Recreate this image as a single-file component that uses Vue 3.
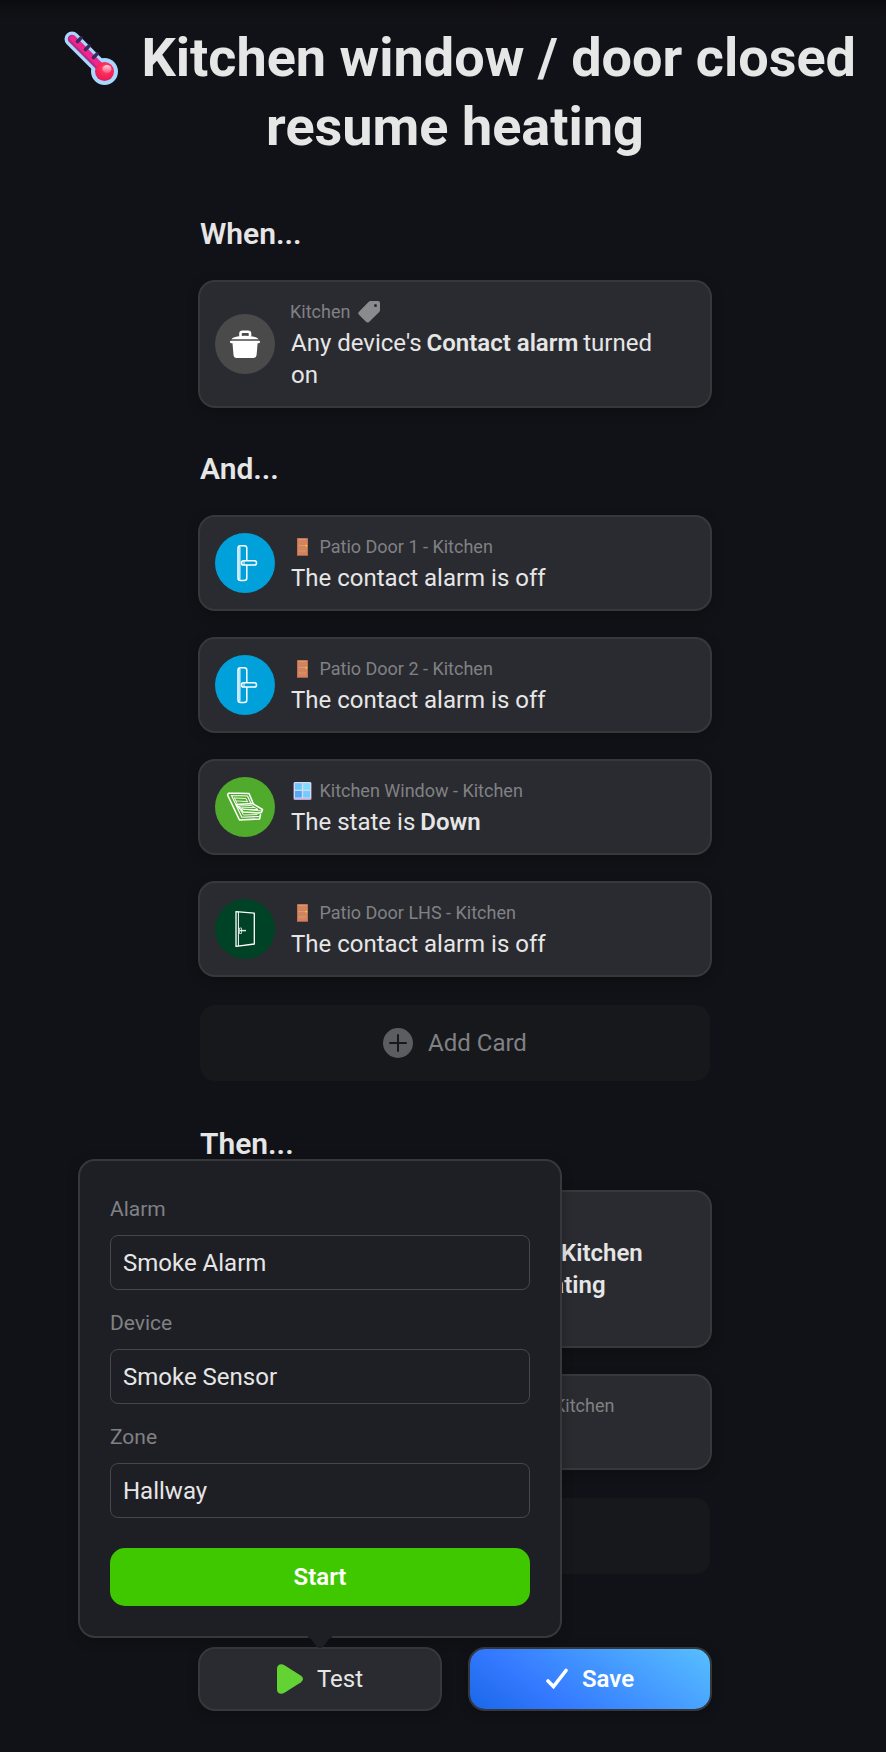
<script setup>
import { ref } from 'vue'

const conditions = [
  { icon: 'handle', tone: 'blue', emoji: 'door', label: 'Patio Door 1 - Kitchen', text: 'The contact alarm is off' },
  { icon: 'handle', tone: 'blue', emoji: 'door', label: 'Patio Door 2 - Kitchen', text: 'The contact alarm is off' },
  { icon: 'roof', tone: 'green', emoji: 'window', label: 'Kitchen Window - Kitchen', text: 'The state is', strong: 'Down' },
  { icon: 'leaf', tone: 'forest', emoji: 'door', label: 'Patio Door LHS - Kitchen', text: 'The contact alarm is off' },
]

const fields = ref([
  { id: 'alarm', label: 'Alarm', value: 'Smoke Alarm' },
  { id: 'device', label: 'Device', value: 'Smoke Sensor' },
  { id: 'zone', label: 'Zone', value: 'Hallway' },
])
</script>

<template>
  <main class="page">
    <h1 class="title">
      <svg class="thermo" viewBox="0 0 74 54" aria-hidden="true">
        <defs>
          <radialGradient id="bulb" cx="0.55" cy="0.35" r="0.7">
            <stop offset="0" stop-color="#ff4a72" />
            <stop offset="0.55" stop-color="#fa2458" />
            <stop offset="1" stop-color="#d81f55" />
          </radialGradient>
          <linearGradient id="shine" x1="0" y1="0" x2="0" y2="1">
            <stop offset="0" stop-color="#ffd3dc" />
            <stop offset="1" stop-color="#ff4f78" />
          </linearGradient>
        </defs>
        <g class="glyph">
          <path d="M18 8 L48 38" stroke="#a9d8ff" stroke-width="15" stroke-linecap="round" />
          <circle cx="50.500" cy="40.500" r="13.500" fill="#a9d8ff" />
          <path d="M18 8 L48 38" stroke="#b52a86" stroke-width="8.500" stroke-linecap="round" />
          <path d="M18.700 7.300 L48.700 37.300" stroke="#f0268c" stroke-width="5.800" stroke-linecap="round" />
          <circle cx="50.500" cy="40.500" r="9.500" fill="url(#bulb)" />
          <ellipse cx="53" cy="38" rx="4.500" ry="4" fill="url(#shine)" />
          <path d="M23.500 10.500 L27 7 M31.500 18.500 L35 15 M39.500 26.500 L43 23" stroke="#3b2a5c" stroke-width="3.600" stroke-linecap="round" />
        </g>
      </svg>
      Kitchen window / door closed resume heating
    </h1>

    <div class="flow">
      <h2 class="heading first">When...</h2>
      <section class="card">
        <span class="badge grey">
          <svg viewBox="0 0 60 60" aria-hidden="true">
            <path d="M25.500 22 V19.500 Q25.500 17.700 27.500 17.700 H33 Q35 17.700 35 19.500 V22" fill="none" stroke="#fff" stroke-width="2.600" />
            <path d="M16.500 25.300 Q17 23.500 20 22.900 Q30 20.500 40 22.900 Q43 23.500 43.500 25.300 Z" fill="#fff" />
            <path d="M16 26.800 H44 Q45.300 26.800 45 28.200 Q44.700 29.300 43.500 29.300 H42.600 L41.600 41 Q41.300 44 38.500 44 H21.500 Q18.800 44 18.500 41 L17.500 29.300 H16.500 Q15.300 29.300 15 28.200 Q14.800 26.800 16 26.800 Z" fill="#fff" />
          </svg>
        </span>
        <div class="body">
          <p class="label">
            Kitchen
            <svg class="tag" viewBox="0 0 22 22" aria-hidden="true">
              <path fill-rule="evenodd" d="M12.500 0 H20 Q22 0 22 2 V9 Q22 10.200 21 11.200 L11 21 Q9.500 22.200 8 20.800 L1 13.800 Q-0.500 12.200 1 10.700 L10.500 1 Q11.500 0 12.500 0 Z M17.500 3 A1.500 1.500 0 1 0 17.500 6 A1.500 1.500 0 1 0 17.500 3 Z" />
            </svg>
          </p>
          <p class="text">
            <span>Any device's</span> <strong>Contact alarm</strong> <span>turned</span> <span>on</span>
          </p>
        </div>
      </section>

      <h2 class="heading">And...</h2>
      <div class="stack">
        <section v-for="c in conditions" :key="c.label" class="card">
          <span class="badge" :class="c.tone">
            <svg v-if="c.icon === 'handle'" viewBox="0 0 60 60" fill="none" stroke="#fff" aria-hidden="true">
              <rect x="23" y="12.800" width="8.800" height="34.600" rx="2.500" stroke-width="1.500" />
              <path d="M24.700 14 V46.500" stroke-width="1.800" opacity="0.750" />
              <rect x="26.500" y="27.800" width="15" height="4.300" rx="2.100" fill="#00a0da" stroke-width="1.500" />
              <path d="M29 28 V32" stroke-width="1" />
            </svg>
            <svg v-else-if="c.icon === 'roof'" viewBox="0 0 60 60" fill="none" stroke="#fff" stroke-linejoin="round" stroke-linecap="round" aria-hidden="true">
              <path d="M14 16 L34 16.500 L38 26 M12.800 18.500 L24.500 43 L44.500 42 L45.500 37.500 M14 16 Q12.500 16.500 12.800 18.500" stroke-width="1.600" />
              <path d="M16.500 18.500 L32.500 19 L36 26.500 M16.500 18.500 L26.800 40.300 L43.500 39.500" stroke-width="1.100" />
              <path d="M19.500 21 L31 21.500 L32.500 25 M19.500 21 L22 26.500 M26 34 L28.500 38 L42 37.500 M21.500 24 L32 24.500" stroke-width="0.900" />
              <path d="M21 27.500 L37.500 26.500 L47.500 32.500 L46.500 35.500 L43.500 36 L28 35 Z" stroke-width="1.500" />
              <path d="M24 29 L36.500 28.500 L43 32.500 L29 32.500 Z M27 30.800 L39 30.500 M28 35 L26 32 L46.500 34" stroke-width="0.900" />
            </svg>
            <svg v-else viewBox="0 0 60 60" fill="none" stroke="#fff" stroke-linejoin="round" aria-hidden="true">
              <path d="M21 12.600 L39.300 14.200 V45 L21 47.400 Z" stroke-width="1.300" />
              <path d="M23.400 13 V47" stroke-width="1" />
              <path d="M24.500 29 H26.500 V34.500 H24.500 Z" stroke-width="0.700" />
              <path d="M25 31.600 H31" stroke-width="1.500" opacity="0.850" />
            </svg>
          </span>
          <div class="body">
            <p class="label">
              <svg v-if="c.emoji === 'door'" class="emoji" viewBox="0 0 25 18" aria-hidden="true">
                <rect x="7" width="11" height="18" rx="0.600" fill="#c0754f" />
                <rect x="8" y="1" width="9" height="16" fill="#cf8660" />
                <path d="M8.500 1.500 H16 M8.500 7.500 H16 M8.500 13 H16" stroke="#e09a70" stroke-width="0.900" />
                <path d="M7.300 17.500 H18" stroke="#a65e48" stroke-width="1" />
                <circle cx="16.300" cy="7.700" r="0.900" fill="#ffc83d" />
              </svg>
              <svg v-else class="emoji" viewBox="0 0 25 18" aria-hidden="true">
                <rect x="3.500" width="18" height="18" rx="1.500" fill="#b9a5d2" />
                <rect x="4" width="17" height="16.500" rx="1.200" fill="#d5d8ec" />
                <rect x="5" y="1.200" width="6.800" height="6.500" fill="#6dc6fb" />
                <rect x="13.200" y="1.200" width="6.800" height="6.500" fill="#7edcff" />
                <rect x="5" y="9" width="6.800" height="6.500" fill="#52a8f8" />
                <rect x="13.200" y="9" width="6.800" height="6.500" fill="#72ccff" />
              </svg>
              {{ c.label }}
            </p>
            <p class="text"><span>{{ c.text }}</span> <strong v-if="c.strong">{{ c.strong }}</strong></p>
          </div>
        </section>
        <button type="button" class="add">
          <svg viewBox="0 0 30 30" aria-hidden="true">
            <circle cx="15" cy="15" r="15" fill="#5c5d60" />
            <path d="M15 7 V23 M7 15 H23" stroke="#17181c" stroke-width="2" stroke-linecap="round" />
          </svg>
          Add Card
        </button>
      </div>

      <h2 class="heading">Then...</h2>
      <div class="stack">
        <section class="card tall">
          <div class="body behind">
            <p class="text"><strong>Kitchen</strong></p>
            <p class="text pulled"><strong>heating</strong></p>
          </div>
        </section>
        <section class="card">
          <div class="body behind short">
            <p class="label">Kitchen</p>
          </div>
        </section>
        <button type="button" class="add" aria-label="Add action"></button>
      </div>

      <div class="actions">
        <div class="anchor">
          <form class="popover" @submit.prevent>
            <div v-for="f in fields" :key="f.id" class="field">
              <label :for="f.id">{{ f.label }}</label>
              <input :id="f.id" v-model="f.value" type="text" />
            </div>
            <button type="submit" class="start">Start</button>
            <svg class="arrow" viewBox="0 0 30 14" aria-hidden="true">
              <path d="M3 0 H27 V2 Q24 2 22.500 5 L18.500 10.500 Q15 13.500 11.500 10.500 L7.500 5 Q6 2 3 2 Z" fill="#1e1f24" />
            </svg>
          </form>
          <button type="button" class="action">
            <svg class="play" viewBox="0 0 26 30" aria-hidden="true">
              <path d="M0 4.500 C0 0.500 4 -1 7.500 1.200 L24 11.800 Q28 15 24 18.200 L7.500 28.800 C4 31 0 29.500 0 25.500 Z" fill="#63d333" />
            </svg>
            Test
          </button>
        </div>
        <button type="button" class="action save">
          <svg class="check" viewBox="0 0 22 22" aria-hidden="true">
            <path d="M2 13 L7.500 18.500 L20 2.500" fill="none" stroke="#fff" stroke-width="3.600" stroke-linecap="round" />
          </svg>
          Save
        </button>
      </div>
    </div>
  </main>
</template>

<style>
body {
  background: #111217;
}
</style>

<style scoped>
.page {
  box-sizing: border-box;
  min-height: 100vh;
  padding: 23px 0 43px 24px;
  background: linear-gradient(#0c0c10, #111217 20px);
  color: #e6e6e6;
  font-family: Roboto, "Liberation Sans", sans-serif;
}
h1, h2, p {
  margin: 0;
}
button, input {
  font: inherit;
  color: inherit;
}
strong {
  font-weight: 600;
}
.title {
  font-size: 54px;
  line-height: 69px;
  font-weight: 700;
  text-align: center;
}
.thermo {
  width: 74px;
  height: 54px;
  vertical-align: -9px;
  fill: none;
}
.flow {
  max-width: 510px;
  margin: 0 auto;
}
.heading {
  margin: 43px 0 28px;
  font-size: 30px;
  line-height: 40px;
  font-weight: 600;
}
.heading.first {
  margin-top: 53px;
}
.stack {
  display: flex;
  flex-direction: column;
  gap: 30px;
}
.card {
  display: flex;
  align-items: center;
  gap: 15px;
  padding: 15px;
  border-radius: 15px;
  background: #2a2b30;
  box-shadow: 0 0 0 2px #37383c, 0 3px 12px 2px rgba(0, 0, 0, 0.25);
}
.badge {
  flex: none;
  width: 60px;
  height: 60px;
  border-radius: 50%;
}
.badge svg {
  display: block;
}
.grey { background: #4a4a4a; }
.blue { background: #00a0da; }
.green { background: #50aa2b; }
.forest { background: #004225; }
.body {
  flex: 1;
  padding-right: 30px;
}
.label {
  font-size: 18px;
  line-height: 30px;
  height: 30px;
  color: #808184;
}
.emoji {
  width: 25px;
  height: 18px;
  vertical-align: -3px;
}
.tag {
  width: 22px;
  height: 22px;
  margin-left: 3px;
  vertical-align: -5px;
  fill: #8a8b8f;
}
.text {
  display: flex;
  flex-wrap: wrap;
  column-gap: 5px;
  padding-left: 1px;
  font-size: 24px;
  line-height: 32px;
}
.add {
  display: flex;
  align-items: center;
  justify-content: center;
  gap: 15px;
  height: 76px;
  padding: 0;
  border: 0;
  border-radius: 15px;
  background: #17181c;
  color: #808184;
  font-size: 24px;
}
.add svg {
  width: 30px;
  height: 30px;
}
.behind {
  padding: 0 0 0 345px;
}
.short {
  min-height: 62px;
  padding-left: 339px;
}
.tall {
  min-height: 124px;
}
.pulled {
  margin-left: -36px;
}
.actions {
  display: grid;
  grid-template-columns: 1fr 1fr;
  gap: 30px;
  margin-top: 75px;
}
.anchor {
  position: relative;
}
.action {
  display: flex;
  align-items: center;
  justify-content: center;
  gap: 14px;
  width: 100%;
  height: 60px;
  padding: 0;
  border: 0;
  border-radius: 15px;
  background: #2a2b30;
  box-shadow: 0 0 0 2px #37383c, 0 3px 12px 2px rgba(0, 0, 0, 0.25);
  font-size: 24px;
}
.save {
  background: linear-gradient(35deg, #1967e8, #3479ff 30%, #57bfff);
  color: #fff;
  font-weight: 600;
}
.play {
  width: 26px;
  height: 30px;
}
.check {
  width: 22px;
  height: 22px;
}
.popover {
  position: absolute;
  bottom: calc(100% + 13px);
  left: 50%;
  z-index: 1;
  box-sizing: border-box;
  width: 480px;
  margin-left: -240px;
  padding: 30px;
  border-radius: 15px;
  background: #1e1f24;
  box-shadow: 0 0 0 2px #37383c, 0 3px 12px 2px rgba(0, 0, 0, 0.25);
}
.field {
  display: flex;
  flex-direction: column;
  gap: 8px;
  margin-bottom: 15px;
}
.field label {
  font-size: 21px;
  line-height: 36px;
  color: #808184;
}
.field input {
  box-sizing: border-box;
  width: 100%;
  height: 55px;
  padding: 0 12px;
  border: 1px solid #46474b;
  border-radius: 8px;
  background: transparent;
  font-size: 24px;
}
.start {
  display: block;
  width: 100%;
  height: 58px;
  margin-top: 30px;
  padding: 0;
  border: 0;
  border-radius: 15px;
  background: #3fc700;
  color: #fff;
  font-size: 24px;
  font-weight: 600;
}
.arrow {
  position: absolute;
  top: 100%;
  left: 50%;
  width: 30px;
  height: 14px;
  margin-left: -15px;
}
</style>
